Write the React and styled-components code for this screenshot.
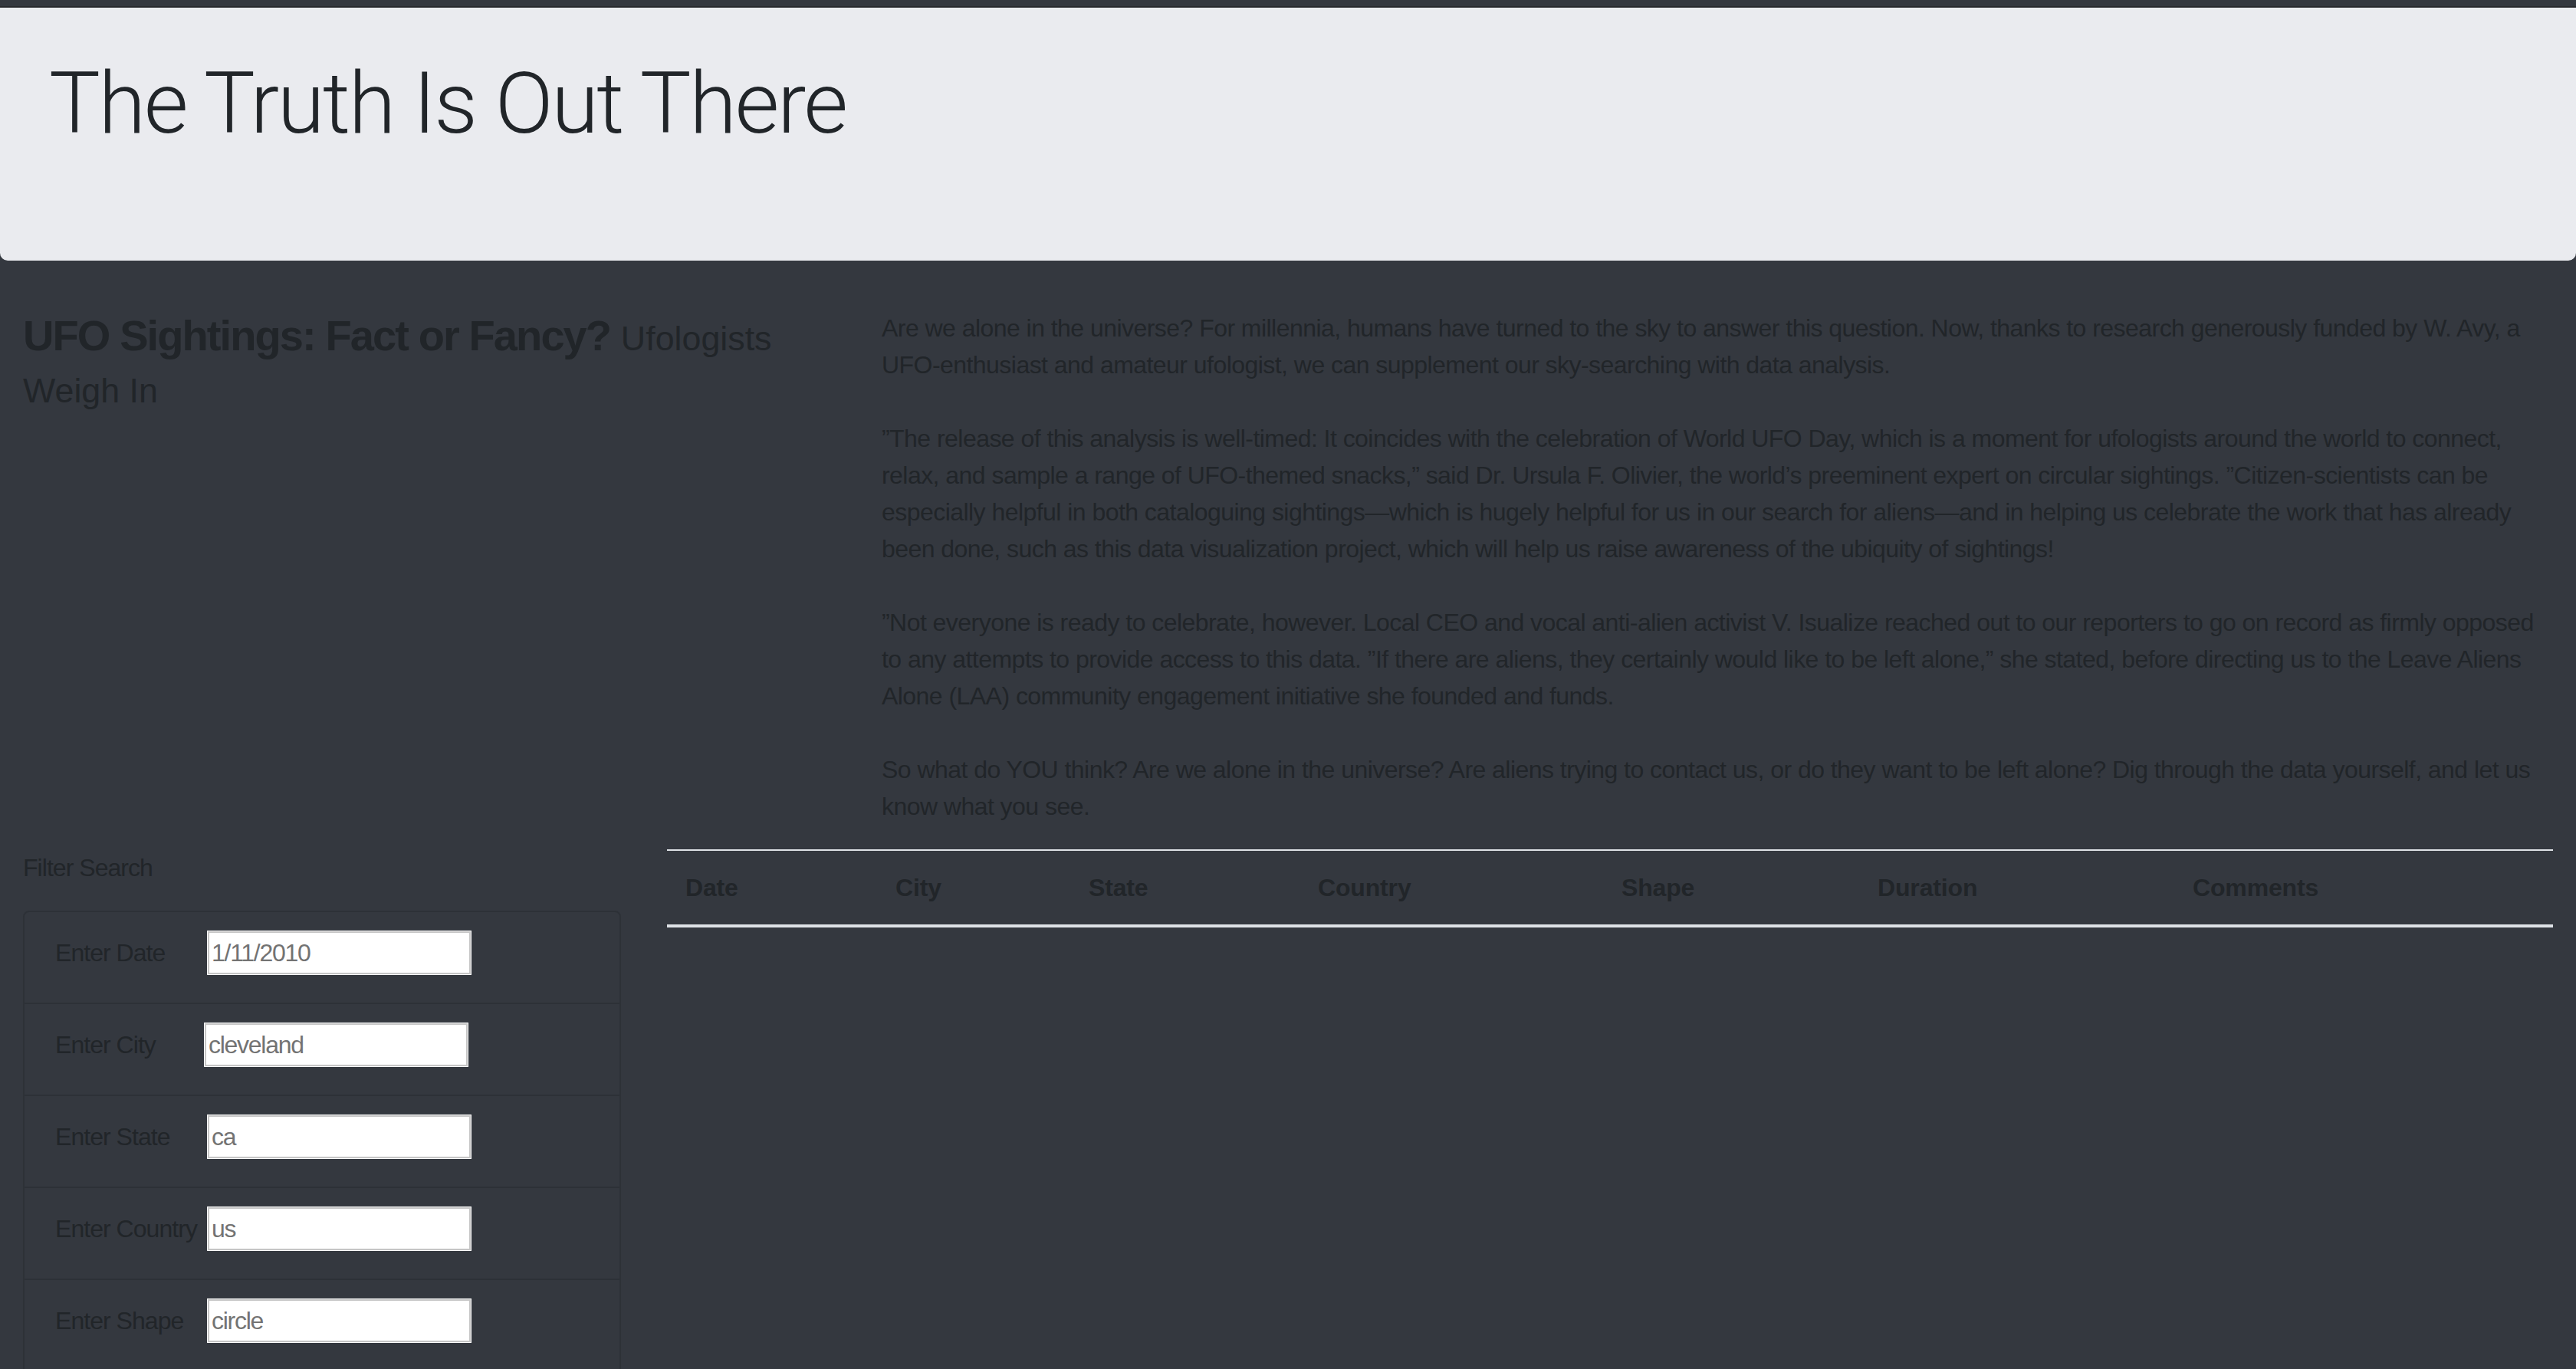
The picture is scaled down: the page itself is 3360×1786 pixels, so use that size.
import styled, { createGlobalStyle } from "styled-components";

const GlobalStyle = createGlobalStyle`
    * {
        box-sizing: border-box;
    }
    body {
        margin: 0;
        background-color: #34383f;
        color: #212529;
        font-family: "Liberation Sans", Arial, sans-serif;
        font-size: 32px;
        line-height: 48px;
        letter-spacing: -0.017em;
    }
`
const Jumbotron = styled.header`
    margin: 8px 0 64px;
    padding: 58px 64px 122px;
    border-top: 2px solid #27292d;
    border-radius: 0 0 10px 10px;
    background-color: #eaebef;
`
const DisplayTitle = styled.h1`
    margin: 0 0 16px;
    font-family: Roboto, "Liberation Sans", sans-serif;
    font-weight: 300;
    font-size: 112px;
    line-height: 1.2;
    letter-spacing: -0.021em;
    color: #212529;
`
const Container = styled.main`
    padding: 0 30px;
`
const Row = styled.div`
    display: flex;
    margin: 0 -30px;
`
const Col = styled.div`
    flex: 0 0 ${props => props.$span / 12 * 100}%;
    max-width: ${props => props.$span / 12 * 100}%;
    padding: 0 30px;
`
const SectionTitle = styled.h3`
    margin: 0;
    font-size: 56px;
    line-height: 1.2;
    font-weight: 700;
    letter-spacing: -0.034em;
`
const SectionSubtitle = styled.small`
    font-size: 80%;
    font-weight: 400;
    letter-spacing: 0;
`
const Article = styled.article`
    display: block;
`
const Paragraph = styled.p`
    margin: 0 0 48px;

    &:last-child {
        margin-bottom: 32px;
    }
`
const FilterTitle = styled.p`
    margin: 0 0 32px;
    letter-spacing: -0.03em;
`
const FilterList = styled.ul`
    list-style: none;
    margin: 0;
    padding: 0;
`
const FilterItem = styled.li`
    display: flex;
    align-items: center;
    padding: 24px 40px 36px;
    border: 2px solid #2d3137;

    & + & {
        border-top: 0;
    }
    &:first-child {
        border-radius: 8px 8px 0 0;
    }
`
const FilterLabel = styled.label`
    flex: 0 0 ${props => props.$width}px;
    white-space: nowrap;
    letter-spacing: -0.03em;
`
const FilterInput = styled.input`
    width: 345px;
    height: 58px;
    padding: 0 5px;
    border: 1px solid #ffffff;
    box-shadow: inset 0 0 0 2px #c6c6c6;
    background-color: #ffffff;
    font: inherit;
    letter-spacing: -0.04em;
    color: #212529;
    outline: none;

    &::placeholder {
        color: #737373;
    }
`
const Table = styled.table`
    width: 100%;
    table-layout: fixed;
    border-collapse: collapse;
`
const HeadCell = styled.th`
    width: ${props => props.$width}px;
    padding: 24px;
    border-top: 2px solid #dee2e6;
    border-bottom: 4px solid #dee2e6;
    text-align: left;
    vertical-align: bottom;
    font-weight: 700;
    letter-spacing: -0.005em;
`

const paragraphs = [
    "Are we alone in the universe? For millennia, humans have turned to the sky to answer this question. Now, thanks to research generously funded by W. Avy, a UFO-enthusiast and amateur ufologist, we can supplement our sky-searching with data analysis.",
    "”The release of this analysis is well-timed: It coincides with the celebration of World UFO Day, which is a moment for ufologists around the world to connect, relax, and sample a range of UFO-themed snacks,” said Dr. Ursula F. Olivier, the world’s preeminent expert on circular sightings. ”Citizen-scientists can be especially helpful in both cataloguing sightings—which is hugely helpful for us in our search for aliens—and in helping us celebrate the work that has already been done, such as this data visualization project, which will help us raise awareness of the ubiquity of sightings!",
    "”Not everyone is ready to celebrate, however. Local CEO and vocal anti-alien activist V. Isualize reached out to our reporters to go on record as firmly opposed to any attempts to provide access to this data. ”If there are aliens, they certainly would like to be left alone,” she stated, before directing us to the Leave Aliens Alone (LAA) community engagement initiative she founded and funds.",
    "So what do YOU think? Are we alone in the universe? Are aliens trying to contact us, or do they want to be left alone? Dig through the data yourself, and let us know what you see.",
];

const filters = [
    { id: "datetime", label: "Enter Date", placeholder: "1/11/2010", width: 198 },
    { id: "city", label: "Enter City", placeholder: "cleveland", width: 194 },
    { id: "state", label: "Enter State", placeholder: "ca", width: 198 },
    { id: "country", label: "Enter Country", placeholder: "us", width: 198 },
    { id: "shape", label: "Enter Shape", placeholder: "circle", width: 198 },
];

const columns = [
    { name: "Date", width: 274 },
    { name: "City", width: 252 },
    { name: "State", width: 299 },
    { name: "Country", width: 396 },
    { name: "Shape", width: 334 },
    { name: "Duration", width: 411 },
    { name: "Comments", width: 494 },
];

const App = () => {
    return (
        <>
            <GlobalStyle />
            <Jumbotron>
                <DisplayTitle>The Truth Is Out There</DisplayTitle>
            </Jumbotron>

            <Container>
                <Row>
                    <Col $span={4}>
                        <SectionTitle>
                            UFO Sightings: Fact or Fancy? <SectionSubtitle>Ufologists Weigh In</SectionSubtitle>
                        </SectionTitle>
                    </Col>
                    <Col $span={8}>
                        <Article>
                            {paragraphs.map((text, i) =>
                                <Paragraph key={i}>{text}</Paragraph>
                            )}
                        </Article>
                    </Col>
                </Row>

                <Row>
                    <Col $span={3}>
                        <FilterTitle>Filter Search</FilterTitle>
                        <FilterList>
                            {filters.map(filter =>
                                <FilterItem key={filter.id}>
                                    <FilterLabel htmlFor={filter.id} $width={filter.width}>{filter.label}</FilterLabel>
                                    <FilterInput id={filter.id} type="text" placeholder={filter.placeholder} />
                                </FilterItem>
                            )}
                        </FilterList>
                    </Col>
                    <Col $span={9}>
                        <Table>
                            <thead>
                                <tr>
                                    {columns.map(col =>
                                        <HeadCell key={col.name} $width={col.width}>{col.name}</HeadCell>
                                    )}
                                </tr>
                            </thead>
                            <tbody></tbody>
                        </Table>
                    </Col>
                </Row>
            </Container>
        </>
    );
};

export default App;
